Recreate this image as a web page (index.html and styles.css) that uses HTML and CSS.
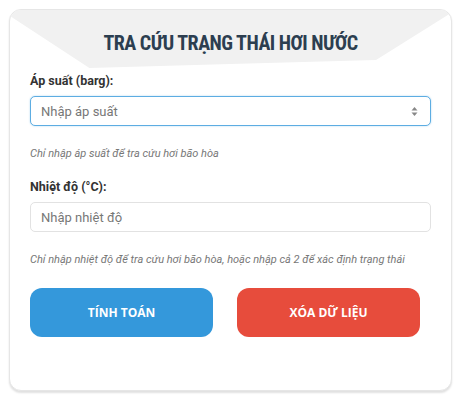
FILE: index.html
```html
<!DOCTYPE html>
<html lang="vi">
<head>
  <meta charset="UTF-8" />
  <meta name="viewport" content="width=device-width, initial-scale=1" />
  <title>Tra cứu trạng thái hơi nước</title>
  <link rel="stylesheet" href="styles.css">
</head>
<body>

  <div class="card">
    <div class="card-top"></div>
    <h1 class="title">TRA CỨU TRẠNG THÁI HƠI NƯỚC</h1>

    <form class="steam-form" onsubmit="return false">
      <label class="field-label" for="pressure">Áp suất (barg):</label>
      <div class="input-wrap">
        <input class="field-input is-focus" type="text" id="pressure" placeholder="Nhập áp suất" />
        <svg class="spin" width="7" height="11" viewBox="0 0 7 11">
          <path d="M3.5 1 L6.5 4.5 L0.5 4.5 Z" fill="#888" />
          <path d="M3.5 10 L6.5 6.5 L0.5 6.5 Z" fill="#888" />
        </svg>
      </div>
      <p class="hint">Chỉ nhập áp suất để tra cứu hơi bão hòa</p>

      <label class="field-label" for="temp">Nhiệt độ (°C):</label>
      <input class="field-input" type="text" id="temp" placeholder="Nhập nhiệt độ" />
      <p class="hint">Chỉ nhập nhiệt độ để tra cứu hơi bão hòa, hoặc nhập cả 2 để xác định trạng thái</p>

      <div class="actions">
        <button type="submit" class="btn btn-blue">TÍNH TOÁN</button>
        <button type="reset" class="btn btn-red">XÓA DỮ LIỆU</button>
      </div>
    </form>
  </div>

</body>
</html>
```

FILE: styles.css
```css
:root {
  --xanh: #3498db;
  --do: #e74c3c;
  --chu: #2c3e50;
  --xam: #777;
  --font-family: 'Roboto', 'Liberation Sans', sans-serif;
}

body {
  margin: 0;
  padding: 9px;
  background-color: #fff;
  font-family: var(--font-family);
  color: #333;
}

.card {
  position: relative;
  background-color: #fff;
  border: 1px solid #e6e6e6;
  border-radius: 12px;
  box-shadow: 0 2px 2px rgba(0, 0, 0, 0.12);
  padding: 0 20px;
  height: 382px;
  box-sizing: border-box;
  overflow: hidden;
}

.card-top {
  position: absolute;
  top: 0;
  left: 0;
  right: 0;
  height: 62px;
  background-color: #f1f1f1;
  clip-path: polygon(0 0, 100% 0, 100% 3px, 83% 50px, 50% 54px, 18% 58px, 0 6px);
}

.title {
  position: relative;
  margin: 0;
  padding-top: 21px;
  height: 37px;
  text-align: center;
  font-family: 'Roboto Condensed', 'Liberation Sans Narrow', 'DejaVu Sans Condensed', sans-serif;
  font-size: 20px;
  letter-spacing: -0.5px;
  font-weight: bold;
  color: var(--chu);
}

.steam-form {
  margin-top: 5px;
}

.field-label {
  display: block;
  font-size: 12.5px;
  font-weight: bold;
  color: #333;
  margin-bottom: 8px;
}

.input-wrap {
  position: relative;
}

.field-input {
  display: block;
  width: 100%;
  height: 30px;
  box-sizing: border-box;
  padding: 0 10px;
  font-family: var(--font-family);
  font-size: 13px;
  border: 1px solid #e2e2e2;
  border-radius: 5px;
  color: #333;
  background-color: #fff;
  outline: none;
}

.field-input::placeholder {
  color: #777;
}

.field-input.is-focus {
  border: 1.5px solid #5dade2;
  box-shadow: 0 0 2px rgba(52, 152, 219, 0.4);
}

.spin {
  position: absolute;
  right: 13px;
  top: 10px;
}

.hint {
  margin: 21px 0 19px;
  font-size: 11px;
  font-style: italic;
  color: #777;
}

.actions {
  display: flex;
  gap: 24px;
  margin-top: 22px;
}

.btn {
  width: 183px;
  height: 49px;
  border: none;
  border-radius: 12px;
  font-family: 'Open Sans', sans-serif;
  font-size: 12px;
  font-weight: bold;
  color: #fff;
  cursor: pointer;
}

.btn-blue {
  background-color: var(--xanh);
}

.btn-red {
  background-color: var(--do);
}
```
